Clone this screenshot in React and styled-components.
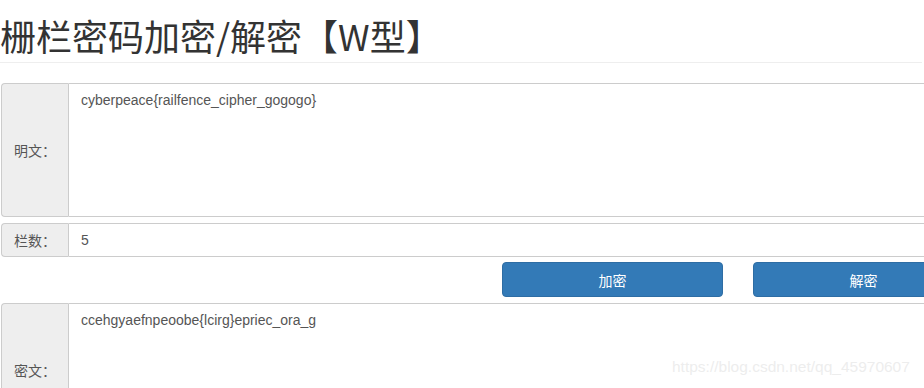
import React from "react";
import styled, { createGlobalStyle } from "styled-components";

const Global = createGlobalStyle`
  html, body { margin: 0; padding: 0; background: #fff; overflow: hidden; }
  body { font-family: "Liberation Sans", "Noto Sans CJK SC", sans-serif; font-size: 14px; color: #333; }
  * { box-sizing: border-box; }
`;

const Page = styled.div`
  position: relative;
  width: 924px;
  height: 388px;
  overflow: hidden;
`;

const Header = styled.div`
  width: 922px;
  border-bottom: 1px solid #eee;
  padding-top: 14px;
  padding-bottom: 6px;
  margin-bottom: 20px;
`;

const Title = styled.h1`
  margin: 0;
  font-family: "Noto Sans CJK SC", "Liberation Sans", sans-serif;
  font-size: 36px;
  font-weight: 400;
  line-height: 42px;
  color: #333;
`;

const Form = styled.div`
  display: flex;
  flex-direction: column;
  padding-left: 1px;
`;

const Group = styled.div`
  display: flex;
  width: 1000px;
  margin-bottom: ${(p) => p.$mb || 0}px;
`;

const Addon = styled.div`
  width: 67px;
  flex: none;
  display: flex;
  align-items: center;
  padding-left: 12px;
  background: #eee;
  border: 1px solid #ccc;
  border-right: none;
  border-radius: 4px 0 0 4px;
  color: #555;
  font-size: 14px;
`;

const Field = styled.div`
  flex: 1;
  height: ${(p) => p.$h}px;
  padding: 6px 12px;
  border: 1px solid #ccc;
  border-radius: 0 4px 4px 0;
  color: #555;
  font-size: 14px;
  line-height: 20px;
  background: #fff;
`;

const Buttons = styled.div`
  display: flex;
  gap: 30px;
  padding-left: 501px;
  margin: 5px 0 6px;
`;

const Button = styled.button`
  flex: none;
  width: 221px;
  height: 35px;
  background: #337ab7;
  border: 1px solid #2e6da4;
  border-radius: 4px;
  color: #fff;
  font-family: "Liberation Sans", "Noto Sans CJK SC", sans-serif;
  font-size: 14px;
  padding: 0;
`;

const Watermark = styled.div`
  position: absolute;
  left: 672px;
  top: 358px;
  font-family: "Liberation Sans", sans-serif;
  font-size: 15.5px;
  color: rgba(236, 236, 236, 0.95);
  white-space: nowrap;
`;

export default function App() {
  return (
    <Page>
      <Global />
      <Header>
        <Title>栅栏密码加密/解密【W型】</Title>
      </Header>
      <Form>
        <Group $mb={6}>
          <Addon>明文：</Addon>
          <Field $h={134}>cyberpeace{"{"}railfence_cipher_gogogo{"}"}</Field>
        </Group>
        <Group>
          <Addon>栏数：</Addon>
          <Field $h={34}>5</Field>
        </Group>
        <Buttons>
          <Button>加密</Button>
          <Button>解密</Button>
        </Buttons>
        <Group>
          <Addon>密文：</Addon>
          <Field $h={134}>ccehgyaefnpeoobe{"{"}lcirg{"}"}epriec_ora_g</Field>
        </Group>
      </Form>
      <Watermark>https://blog.csdn.net/qq_45970607</Watermark>
    </Page>
  );
}
